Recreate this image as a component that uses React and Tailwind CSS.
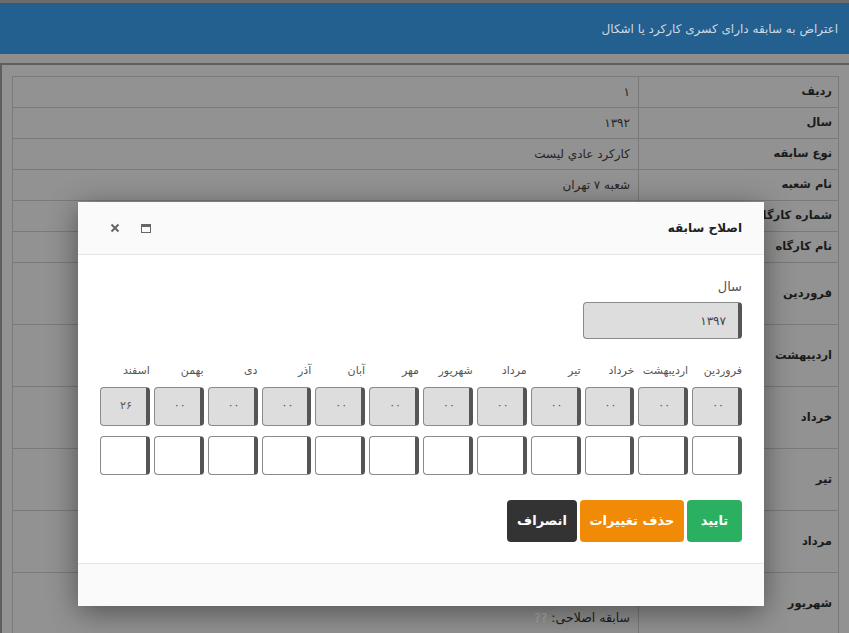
import React from 'react';

const infoRows = [
  { label: 'ردیف', value: '۱' },
  { label: 'سال', value: '۱۳۹۲' },
  { label: 'نوع سابقه', value: 'کارکرد عادي ليست' },
  { label: 'نام شعبه', value: 'شعبه ۷ تهران' },
  { label: 'شماره کارگاه', value: '' },
  { label: 'نام کارگاه', value: '' },
];

const months = ['فروردین', 'اردیبهشت', 'خرداد', 'تیر', 'مرداد', 'شهریور', 'مهر', 'آبان', 'آذر', 'دی', 'بهمن', 'اسفند'];
const monthValues = ['۰۰', '۰۰', '۰۰', '۰۰', '۰۰', '۰۰', '۰۰', '۰۰', '۰۰', '۰۰', '۰۰', '۲۶'];

const font = { fontFamily: '"DejaVu Sans", "Noto Sans", sans-serif' };

function App() {
  return (
    <div dir="rtl" style={font} className="relative min-h-[633px] bg-[#8e8e8e] overflow-hidden">
      <div className="h-[3px] bg-[#6c6c6c]" />
      <div className="h-[51px] bg-[#235f8f] flex items-center px-[11px] text-[12px] text-[#cfd8e1]">
        اعتراض به سابقه دارای کسری کارکرد یا اشکال
      </div>
      <div className="mt-[9px] border-t-2 border-l-2 border-[#5f5f5f] bg-[#929292] px-[10px] pt-[11px]">
        <table className="w-full border-collapse text-[12px] text-[#1b1b1b]">
          <tbody>
            {infoRows.map((r) => (
              <tr key={r.label} className="h-[31px]">
                <td className="w-[200px] border border-[#7a7a7a] px-[6px] font-bold text-[11.5px] whitespace-nowrap">{r.label}</td>
                <td className="border border-[#7a7a7a] px-[8px] text-[#262626]">{r.value}</td>
              </tr>
            ))}
            {months.slice(0, 6).map((m) => (
              <tr key={m} className="h-[62px]">
                <td className="w-[200px] border border-[#7a7a7a] px-[6px] font-bold text-[11.5px]">{m}</td>
                <td className="border border-[#7a7a7a] px-[8px] align-bottom pb-[6px] text-[12.5px]">
                  سابقه اصلاحی: <span className="text-[#b0b0b0]">??</span>
                </td>
              </tr>
            ))}
          </tbody>
        </table>
      </div>

      {/* modal */}
      <div className="absolute left-[78px] top-[202px] w-[686px] bg-white rounded-[2px] shadow-[0_6px_30px_rgba(0,0,0,0.45)]">
        <div className="h-[53px] bg-[#fafafa] border-b border-[#e6e6e6] flex items-center justify-between pr-[22px] pl-[32px]">
          <span className="text-[12px] font-bold text-[#222]">اصلاح سابقه</span>
          <div className="flex items-center gap-[21px]">
            <svg width="10" height="9" viewBox="0 0 10 9">
              <rect x="0.5" y="0.5" width="9" height="8" fill="none" stroke="#666" />
              <rect x="0.5" y="0.5" width="9" height="2.5" fill="#666" />
            </svg>
            <svg width="10" height="10" viewBox="0 0 10 10">
              <path d="M1.5 1.5 L8.5 8.5 M8.5 1.5 L1.5 8.5" stroke="#666" strokeWidth="2" />
            </svg>
          </div>
        </div>

        <div className="px-[22px] pt-[22px] pb-[21px]">
          <div className="text-[13px] text-[#555] leading-[20px]">سال</div>
          <div className="mt-[5px] w-[159px] h-[37px] flex items-center px-[12px] rounded-[4px] border border-[#8a8a8a] border-r-[4px] border-r-[#555] bg-[#dddddd] text-[12px] text-[#444]">
            ۱۳۹۷
          </div>

          <div className="mt-[22px] grid grid-cols-12 gap-x-[4px]">
            {months.map((m) => (
              <div key={m} className="whitespace-nowrap text-[11px] text-[#555] leading-[20px]">{m}</div>
            ))}
          </div>
          <div className="mt-[6px] grid grid-cols-12 gap-x-[4px]">
            {monthValues.map((v, i) => (
              <div key={i} className="h-[39px] flex items-center px-[14px] rounded-[4px] border border-[#8a8a8a] border-r-[4px] border-r-[#555] bg-[#dddddd] text-[11px] text-[#555]">
                {v}
              </div>
            ))}
          </div>
          <div className="mt-[10px] grid grid-cols-12 gap-x-[4px]">
            {monthValues.map((v, i) => (
              <div key={i} className="h-[39px] rounded-[4px] border border-[#8a8a8a] border-r-[4px] border-r-[#555] bg-white" />
            ))}
          </div>

          <div className="mt-[25px] flex gap-[3px] text-[13px] font-bold text-white">
            <button className="h-[42px] w-[55px] rounded-[4px] bg-[#2bb062]">تایید</button>
            <button className="h-[42px] w-[104px] rounded-[4px] bg-[#f08a07]">حذف تغییرات</button>
            <button className="h-[42px] w-[70px] rounded-[4px] bg-[#333333]">انصراف</button>
          </div>
        </div>

        <div className="h-[43px] bg-[#fafafa] border-t border-[#e6e6e6]" />
      </div>
    </div>
  );
}

export default App;
